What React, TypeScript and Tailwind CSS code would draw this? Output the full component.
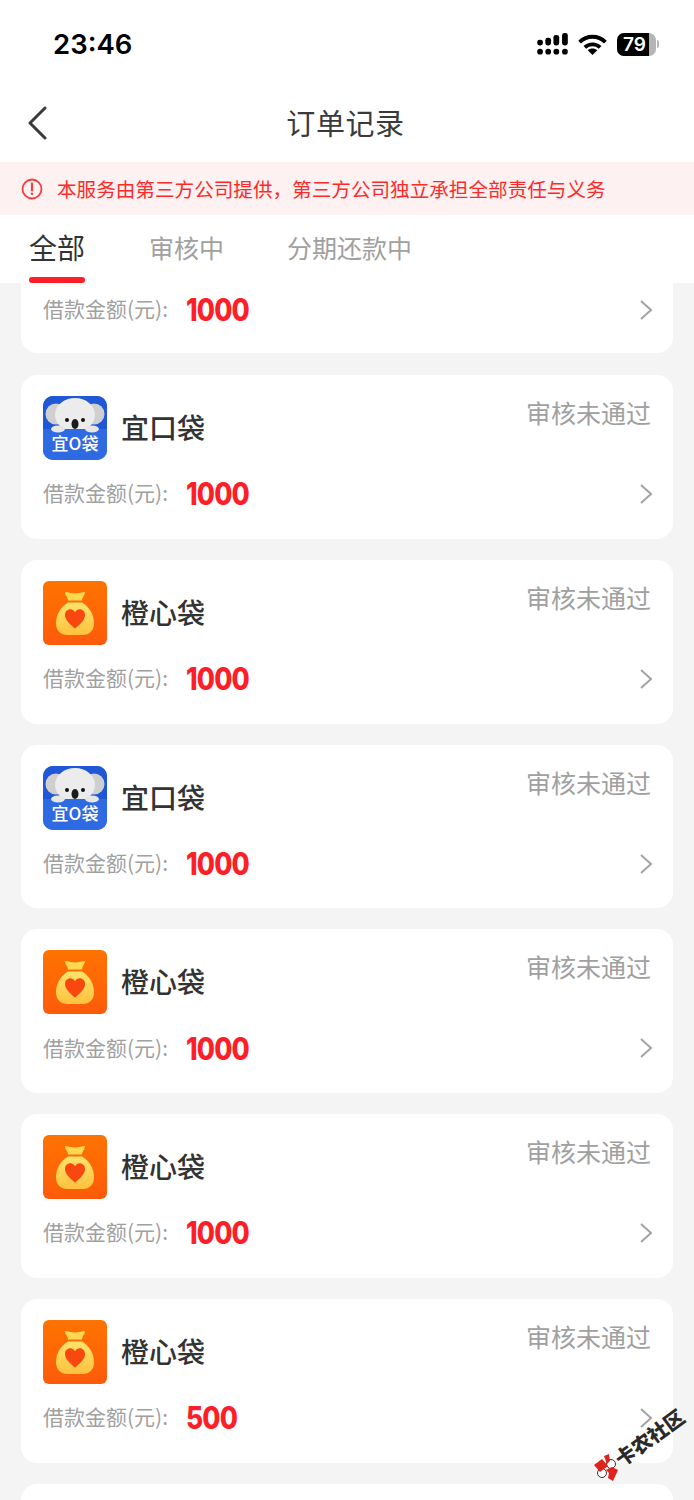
const cjk = "font-['Noto_Sans_CJK_SC','Noto_Sans',sans-serif]";

type Order = { name: string; kind: "koala" | "bag"; amount: string };

const orders: Order[] = [
  { name: "宜口袋", kind: "koala", amount: "1000" },
  { name: "橙心袋", kind: "bag", amount: "1000" },
  { name: "宜口袋", kind: "koala", amount: "1000" },
  { name: "橙心袋", kind: "bag", amount: "1000" },
  { name: "橙心袋", kind: "bag", amount: "1000" },
  { name: "橙心袋", kind: "bag", amount: "500" },
];

function SignalIcon() {
  return (
    <svg width="31" height="22" viewBox="0 0 32 23" fill="#000">
      <rect x="0" y="7" width="6" height="6" rx="2.5" />
      <rect x="8.5" y="5" width="6" height="8" rx="2.5" />
      <rect x="17" y="2" width="6" height="11" rx="2.5" />
      <rect x="26" y="0" width="6" height="13" rx="2.5" />
      <circle cx="3" cy="19.5" r="3" />
      <circle cx="11.5" cy="19.5" r="3" />
      <circle cx="20" cy="19.5" r="3" />
      <circle cx="29" cy="19.5" r="3" />
    </svg>
  );
}

function WifiIcon() {
  return (
    <svg width="29" height="21" viewBox="0 0 30 22" fill="none" stroke="#000" strokeWidth="4">
      <path d="M1.5 8.500C9 1 21 1 28.500 8.500" />
      <path d="M7 14c4.500-4.200 11.500-4.200 16 0" />
      <path d="M15 22l-5-5c3-2.400 7-2.400 10 0z" fill="#000" stroke="none" />
    </svg>
  );
}

function Battery() {
  return (
    <div className="flex items-center">
      <div className="relative flex h-[23px] w-[39px] items-center overflow-hidden rounded-[7px] bg-[#b5b5b5]">
        <div className="h-full w-[32px] bg-black" />
        <span className="absolute left-[6px] top-0 font-['Inter',sans-serif] text-[19px] font-semibold leading-[23px] text-white">
          79
        </span>
      </div>
      <div className="ml-px h-[8px] w-[2px] rounded-r bg-[#b5b5b5]" />
    </div>
  );
}

function AlertIcon() {
  return (
    <svg width="22" height="22" viewBox="0 0 22 22" fill="none" stroke="#fb3c3c" strokeWidth="1.800">
      <circle cx="11" cy="11" r="9.500" />
      <path d="M11 5.500v7" strokeWidth="2.200" strokeLinecap="round" />
      <circle cx="11" cy="15.800" r="1.200" fill="#fb3c3c" stroke="none" />
    </svg>
  );
}

function Chevron({ className }: { className?: string }) {
  return (
    <svg className={className} width="14" height="20" viewBox="0 0 14 20" fill="none" stroke="#a3a3a3" strokeWidth="2">
      <path d="M2 1l10 9-10 9" />
    </svg>
  );
}

function KoalaLogo() {
  return (
    <div className="relative h-16 w-16 overflow-hidden rounded-[10px] bg-[#2e6ae2]">
      <svg className="absolute left-0 top-0" width="64" height="64" viewBox="0 0 64 64">
        <rect width="64" height="35" fill="#1f57d6" />
        <circle cx="13" cy="18" r="10.500" fill="#cfcfcf" />
        <circle cx="51" cy="18" r="10.500" fill="#cfcfcf" />
        <ellipse cx="32" cy="19" rx="20" ry="17" fill="#ececec" />
        <circle cx="24" cy="24" r="2" fill="#111" />
        <circle cx="40" cy="24" r="2" fill="#111" />
        <ellipse cx="32" cy="28" rx="3.500" ry="5" fill="#1b1b1b" />
        <rect y="33" width="64" height="31" fill="#2e6ae2" />
        <ellipse cx="15" cy="33" rx="7" ry="3.500" fill="#e6e6e6" />
        <ellipse cx="49" cy="33" rx="7" ry="3.500" fill="#e6e6e6" />
      </svg>
      <span className={`${cjk} absolute inset-x-0 bottom-[6px] text-center text-[17px] font-medium leading-[22px] text-white`}>
        宜O袋
      </span>
    </div>
  );
}

function BagLogo() {
  return (
    <div className="flex h-16 w-16 items-center justify-center rounded-[6px] bg-gradient-to-b from-[#ff7300] to-[#fd5a0b]">
      <svg width="38" height="44" viewBox="0 0 38 42" preserveAspectRatio="none">
        <defs>
          <linearGradient id="bagFill" x1="0" y1="0" x2="0" y2="1">
            <stop offset="0" stopColor="#ffe36a" />
            <stop offset="1" stopColor="#fdc13e" />
          </linearGradient>
        </defs>
        <path d="M10 1c3 .6 6 1.400 9 1.400S25 1.600 28 1c1.500 0 1 2-.5 4-1 1.400-1.500 3-1.500 4H12c0-1-.5-2.600-1.500-4C9 3 8.500 1 10 1z" fill="#ffd84f" />
        <path d="M12 11h14c7 4 12 11 12 20 0 7-5 11-11 11H11C5 42 0 38 0 31c0-9 5-16 12-20z" fill="url(#bagFill)" />
        <path d="M19 36c-4-3.500-10-7.500-10-13 0-3.400 2.500-5.500 5.300-5.500 2 0 3.600 1 4.700 2.800 1.100-1.800 2.700-2.800 4.700-2.800 2.800 0 5.300 2.100 5.300 5.500 0 5.500-6 9.500-10 13z" fill="#f9480f" />
      </svg>
    </div>
  );
}

function AmountRow({ amount }: { amount: string }) {
  return (
    <div className="flex h-[34px] items-center">
      <span className={`${cjk} mt-[-2px] w-[143px] text-[21px] text-[#a0a0a0]`}>借款金额(元):</span>
      <span className="mt-px inline-block origin-left scale-x-[0.85] font-['Inter',sans-serif] text-[31px] font-extrabold tracking-[-1px] text-[#fd1f27]">
        {amount}
      </span>
      <Chevron className="ml-auto mr-[-2px]" />
    </div>
  );
}

function OrderCard({ order }: { order: Order }) {
  return (
    <div className="h-[163.800px] rounded-2xl bg-white px-[22px] pt-[21px]">
      <div className="flex h-16 items-start">
        {order.kind === "koala" ? <KoalaLogo /> : <BagLogo />}
        <span className={`${cjk} ml-[14px] mt-[11px] text-[28px] font-medium leading-[40px] text-[#333333]`}>
          {order.name}
        </span>
        <span className={`${cjk} ml-auto mt-[-3px] text-[25px] leading-[38px] text-[#a0a0a0]`}>审核未通过</span>
      </div>
      <div className="mt-[17px]">
        <AmountRow amount={order.amount} />
      </div>
    </div>
  );
}

export default function App() {
  return (
    <div className={`${cjk} relative h-[1500px] w-[694px] overflow-hidden bg-[#f4f4f4]`}>
      <div className="flex h-[88px] items-center justify-between bg-white pl-[53px] pr-[35px]">
        <span className="pt-[2px] font-['Inter',sans-serif] text-[27.500px] font-semibold text-black">23:46</span>
        <div className="flex items-center gap-[10px]">
          <SignalIcon />
          <WifiIcon />
          <Battery />
        </div>
      </div>

      <div className="relative flex h-[74px] items-center justify-center bg-white pb-[7px]">
        <svg className="absolute left-[27px] top-[18px]" width="22" height="34" viewBox="0 0 22 34" fill="none" stroke="#3a3a3a" strokeWidth="3" strokeLinecap="round" strokeLinejoin="round">
          <path d="M18 2L3 17l15 15" />
        </svg>
        <span className="mr-[3px] text-[29px] leading-[40px] tracking-[0.6px] text-[#3a3a3a]">订单记录</span>
      </div>

      <div className="flex h-[53px] items-center gap-[14px] bg-[#fef1f1] pl-[21px]">
        <AlertIcon />
        <span className="text-[19.600px] text-[#fb2b2b]">{"本服务由第三方公司提供\uFF0C第三方公司独立承担全部责任与义务"}</span>
      </div>

      <div className="flex h-[68px] bg-white pl-[29px]">
        <div className="relative mr-[64px] h-full">
          <span className="block pt-[10px] text-[28px] leading-[44px] text-[#333333]">全部</span>
          <div className="absolute bottom-0 left-0 h-[6px] w-full rounded-full bg-[#fd1f27]" />
        </div>
        <span className="mr-[63px] pt-[10px] text-[25px] leading-[44px] text-[#a0a0a0]">审核中</span>
        <span className="pt-[10px] text-[25px] leading-[44px] text-[#a0a0a0]">分期还款中</span>
      </div>

      <div className="h-[1217px] overflow-hidden px-[21px]">
        <div className="flex flex-col gap-[21px]">
          <div className="mb-px h-[70px] rounded-b-2xl bg-white px-[22px] pt-[10px]">
            <AmountRow amount="1000" />
          </div>
          {orders.map((order, i) => (
            <OrderCard key={i} order={order} />
          ))}
          <div className="h-[164px] rounded-2xl bg-white" />
        </div>
      </div>

      {/* forum watermark sits over the last card */}
      <svg className="absolute left-[592px] top-[1452px]" width="28" height="30" viewBox="0 0 28 30">
        <circle cx="19" cy="12" r="4.500" fill="#fff" stroke="#333" strokeWidth="1" />
        <circle cx="10" cy="21" r="4.500" fill="#fff" stroke="#333" strokeWidth="1" />
        <path d="M2 13l8-6 6 7-8 6z" fill="#e0231c" />
        <path d="M12 4l5-2 1 7-3 3z" fill="#e0231c" />
        <path d="M14 18l6-3 6 3-5 11-5-3 1-5z" fill="#e0231c" />
      </svg>
      <span className="absolute left-[617px] top-[1448px] origin-left -rotate-[36deg] whitespace-nowrap text-[20px] font-black leading-[26px] text-[#2a2a2a]">
        卡农社区
      </span>
    </div>
  );
}
